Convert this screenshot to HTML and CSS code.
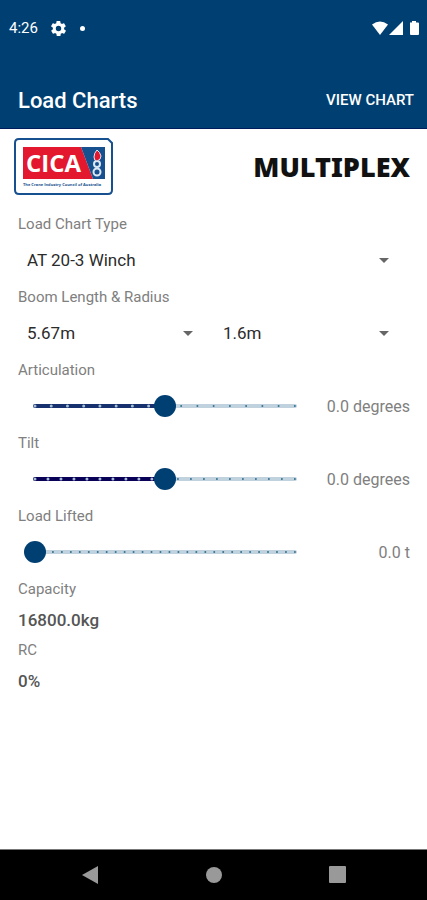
FILE: index.html
```html
<!DOCTYPE html>
<html lang="en">
<head>
<meta charset="utf-8">
<meta name="viewport" content="width=device-width, initial-scale=1">
<title>Load Charts</title>
<link rel="stylesheet" href="styles.css">
</head>
<body>
<header class="header">
  <div class="status">
    <span class="time">4:26</span>
    <svg class="gear" width="15" height="15" viewBox="2 2 20 20" aria-hidden="true"><path fill="#fff" fill-rule="evenodd" d="M19.4 13c0-.3.1-.6.1-1s0-.7-.1-1l2.100-1.600c.2-.2.200-.4.100-.6l-2-3.500c-.1-.2-.4-.3-.6-.2l-2.500 1c-.5-.4-1.100-.7-1.700-1l-.4-2.600c0-.3-.2-.5-.5-.5h-4c-.3 0-.5.2-.5.4l-.4 2.700c-.6.2-1.200.6-1.700 1l-2.500-1c-.2-.1-.5 0-.6.2l-2 3.500c-.1.200-.1.500.1.600L4.600 11c0 .3-.1.700-.1 1s0 .7.100 1l-2.100 1.600c-.2.200-.2.400-.1.600l2 3.500c.1.200.4.300.6.200l2.500-1c.5.400 1.100.7 1.700 1l.4 2.600c0 .3.200.5.500.5h4c.3 0 .5-.2.500-.4l.4-2.700c.6-.2 1.200-.6 1.700-1l2.500 1c.2.1.5 0 .6-.2l2-3.500c.1-.2.1-.5-.1-.6zM12 15.600a3.600 3.600 0 1 1 0-7.200 3.600 3.600 0 0 1 0 7.200z"/></svg>
    <span class="dot"></span>
    <svg class="signals" width="50" height="16" viewBox="0 0 50 16" fill="#fff" aria-hidden="true">
      <path d="M1 4.500Q9 -1.500 17 4.500L9 15z"/>
      <path d="M18 15L32 1V15z"/>
      <path d="M39 2.500h2V1h4v1.500h2q1 0 1 1V14q0 1-1 1h-7q-1 0-1-1z"/>
    </svg>
  </div>
  <div class="toolbar">
    <h1 class="title">Load Charts</h1>
    <button class="action" type="button">VIEW CHART</button>
  </div>
</header>
<main class="content">
  <div class="logos">
    <svg width="100" height="58" viewBox="0 0 100 58" role="img" aria-label="CICA, The Crane Industry Council of Australia">
      <path d="M5 1H94L98 5V52Q98 56 94 56H5Q1 56 1 52V5Q1 1 5 1z" fill="#fff" stroke="#17508f" stroke-width="2"/>
      <path d="M9 9H67L79 41H9z" fill="#e3172d"/>
      <path d="M67 9H91V41H79z" fill="#17508f"/>
      <text class="cica" x="12" y="34">CICA</text>
      <g fill="none" stroke="#dce8f3" stroke-width="2"><circle cx="83" cy="26" r="3"/><circle cx="83" cy="34" r="3.500"/></g>
      <path d="M83 12Q80 15 80 19Q80 23 83 23Q87 22 87 18Q86 14 83 12z" fill="#e3172d" stroke="#dce8f3"/>
      <text class="motto" x="9" y="48">The Crane Industry Council of Australia</text>
    </svg>
    <span class="multiplex">MULTIPLEX</span>
  </div>
  <form class="form">
    <label class="label" for="type">Load Chart Type</label>
    <div class="selects">
      <span class="picker"><select id="type"><option>AT 20-3 Winch</option></select></span>
    </div>
    <label class="label" for="boom">Boom Length &amp; Radius</label>
    <div class="selects">
      <span class="picker"><select id="boom"><option>5.67m</option></select></span>
      <span class="picker"><select aria-label="Radius"><option>1.6m</option></select></span>
    </div>
    <label class="label" for="articulation">Articulation</label>
    <div class="slider-row">
      <div class="slider">
        <svg class="rail" aria-hidden="true"><line class="track" x2="100%" y1="11" y2="11"/><line class="ticks" x2="100%" y1="11" y2="11" pathLength="1601"/><line class="fill" x2="50%" y1="11" y2="11"/><line class="fill-ticks" x2="50%" y1="11" y2="11" pathLength="801"/></svg>
        <input id="articulation" type="range" min="-8" max="8" value="0">
      </div>
      <output class="reading" for="articulation">0.0 degrees</output>
    </div>
    <label class="label" for="tilt">Tilt</label>
    <div class="slider-row">
      <div class="slider">
        <svg class="rail" aria-hidden="true"><line class="track" x2="100%" y1="11" y2="11"/><line class="ticks" x2="100%" y1="11" y2="11" pathLength="2001"/><line class="fill deep" x2="50%" y1="11" y2="11"/><line class="fill-ticks" x2="50%" y1="11" y2="11" pathLength="1001"/></svg>
        <input id="tilt" type="range" min="-10" max="10" value="0">
      </div>
      <output class="reading" for="tilt">0.0 degrees</output>
    </div>
    <label class="label" for="load">Load Lifted</label>
    <div class="slider-row">
      <div class="slider">
        <svg class="rail" aria-hidden="true"><line class="track" x2="100%" y1="11" y2="11"/><line class="ticks" x2="100%" y1="11" y2="11" pathLength="2901"/></svg>
        <input id="load" type="range" min="0" max="29" value="0">
      </div>
      <output class="reading" for="load">0.0 t</output>
    </div>
    <span class="label">Capacity</span>
    <output class="result">16800.0kg</output>
    <span class="label">RC</span>
    <output class="result">0%</output>
  </form>
</main>
<nav class="nav">
  <button type="button" aria-label="Back"><svg width="18" height="20" viewBox="0 0 18 20"><path d="M1 10L17 1V19z"/></svg></button>
  <button type="button" aria-label="Home"><svg width="18" height="20" viewBox="0 0 18 20"><circle cx="9" cy="10" r="8"/></svg></button>
  <button type="button" aria-label="Recents"><svg width="18" height="20" viewBox="0 0 18 20"><rect y="1" width="17" height="17" rx="1"/></svg></button>
</nav>
</body>
</html>
```
FILE: styles.css
```css
* { box-sizing: border-box; }
body {
  margin: 0;
  min-height: 100vh;
  display: flex;
  flex-direction: column;
  background: #fff;
  color: #808080;
  font-family: Roboto, "Liberation Sans", sans-serif;
  font-size: 16px;
}
button, select { font: inherit; border: 0; background: none; padding: 0; }

.header { background: #003f72; color: #fff; border-bottom: 1px solid #001c5a; }
.status { display: flex; align-items: center; height: 56px; padding: 0 6px 0 9px; }
.time { font-size: 15px; }
.gear { margin-left: 13px; }
.dot { width: 5px; height: 5px; margin-left: 14px; border-radius: 50%; background: #fff; }
.signals { margin-left: auto; }
.toolbar {
  display: flex;
  align-items: center;
  justify-content: space-between;
  height: 56px;
  margin-top: 16px;
  padding: 0 13px 0 18px;
}
.title { margin: 0; font-size: 22px; font-weight: 500; }
.action { color: #fff; font-size: 15px; font-weight: 500; }

.content { flex: 1; padding: 9px 17px 0 18px; }
.logos { display: flex; align-items: center; justify-content: space-between; margin-left: -4px; height: 58px; }
.cica { font: 700 24px "Open Sans", sans-serif; fill: #fff; }
.motto { font: 700 4px "Open Sans", sans-serif; fill: #17508f; }
.multiplex { font: 900 27px/36px "Noto Sans", sans-serif; color: #111; }

.form { display: flex; flex-direction: column; margin-top: 16px; }
.label { height: 23px; line-height: 24px; font-size: 15px; }
.selects { display: grid; grid-auto-flow: column; grid-auto-columns: 1fr; height: 50px; }
.picker { display: grid; align-items: center; }
.picker::after {
  content: "";
  grid-area: 1 / 1;
  justify-self: end;
  margin-right: 21px;
  border: 5px solid transparent;
  border-top-color: #666;
  border-bottom: 0;
  pointer-events: none;
}
.picker select {
  grid-area: 1 / 1;
  appearance: none;
  width: 100%;
  height: 100%;
  padding-left: 9px;
  color: #2b2b2b;
  font-size: 17px;
}

.slider-row { display: grid; grid-template-columns: 1fr 104px; align-items: center; height: 50px; padding-left: 6px; }
.slider { display: grid; }
.rail { grid-area: 1 / 1; width: calc(100% - 22px); height: 22px; margin: 0 11px; overflow: visible; }
.rail line { stroke-linecap: round; }
.track { stroke: #c1d2df; stroke-width: 4; }
.ticks { stroke: #35708f; stroke-width: 2; stroke-dasharray: 0 100; }
.fill { stroke: #17316f; stroke-width: 4; }
.fill.deep { stroke: #090058; }
.fill-ticks { stroke: #a5bdd5; stroke-width: 3; stroke-dasharray: 0 100; }
.slider input { grid-area: 1 / 1; z-index: 1; appearance: none; width: 100%; height: 22px; margin: 0; background: none; }
.slider input::-webkit-slider-thumb {
  appearance: none;
  width: 22px;
  height: 22px;
  border-radius: 50%;
  background: #003f72;
}
.reading { text-align: right; }
.result { height: 38px; line-height: 40px; color: #555; font-size: 17px; font-weight: 500; }

.nav { display: flex; justify-content: space-around; height: 51px; padding: 0 27px 0 28px; background: #000; border-top: 1px solid #777; }
.nav button { display: grid; place-items: center; width: 48px; }
.nav svg { fill: #999; }
```
